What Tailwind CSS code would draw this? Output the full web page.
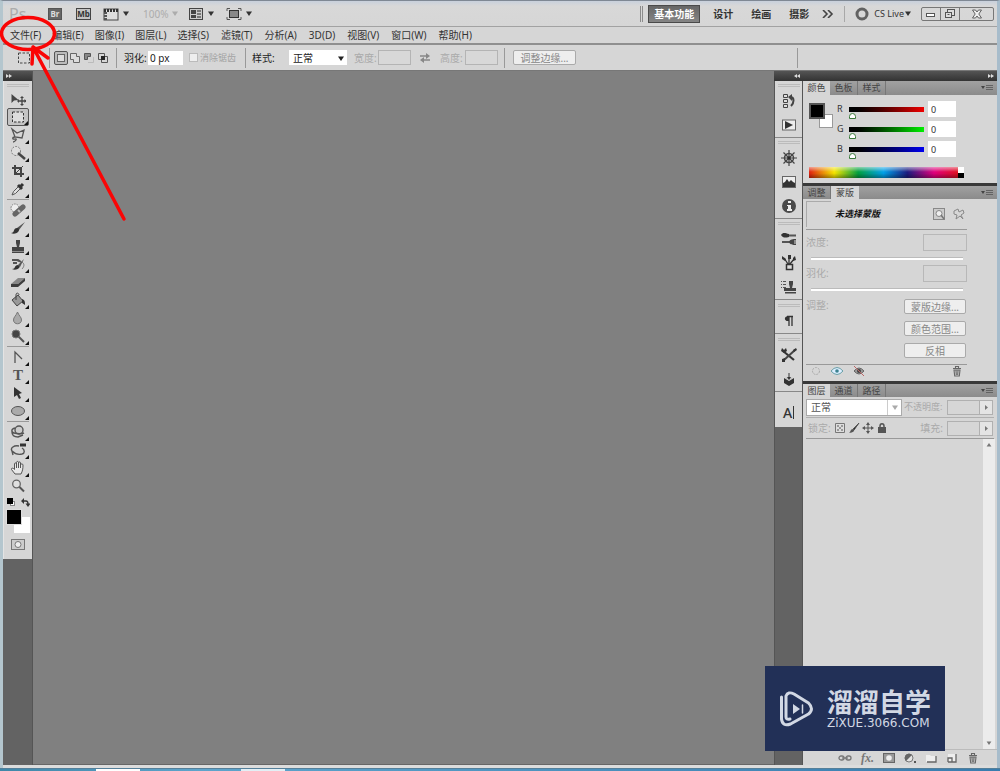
<!DOCTYPE html>
<html lang="zh-CN">
<head>
<meta charset="utf-8">
<title>Ps</title>
<script src="https://cdn.jsdelivr.net/npm/@tailwindcss/browser@4"></script>
</head>
<body class="font-['Noto_Sans','Noto_Sans_CJK_SC',sans-serif] text-[10px] leading-3 text-[#333]">
<svg width="0" height="0" class="absolute" aria-hidden="true">
  <defs>
    <symbol id="down" viewBox="0 0 6 5"><path d="M0 .5h6L3 5z" fill="currentColor"/></symbol>
    <symbol id="tick" viewBox="0 0 4 4"><path d="M4 0v4H0z" fill="#111"/></symbol>
    <symbol id="menu" viewBox="0 0 12 8"><path d="M0 2h4L2 5z" fill="#444"/><path d="M5 1.500h7M5 3.500h7M5 5.500h7" stroke="#555" stroke-width=".8"/></symbol>
    <symbol id="trash" viewBox="0 0 12 12"><path d="M2 3.500h8M4.500 3V1.500h3V3M3 5l.7 6h4.600L9 5zM5 5.500l.3 4.500M7 5.500L6.700 10" fill="none" stroke="#666" stroke-width="1.100"/></symbol>
  </defs>
</svg>
<div class="relative flex h-screen flex-col overflow-hidden bg-[#d6d6d6]">
  <div class="flex min-h-0 flex-1 flex-col border-x-[3px] border-l-[#b4c6ce] border-r-[#a7bccb] border-t border-t-[#7f8894]">
    <header class="flex h-[26px] shrink-0 items-center border-b border-[#a2a2a2] bg-linear-to-b from-[#c8d0dc] via-[#d8d8d8] via-20% to-[#d6d6d6] pl-[6px] pr-[3px]">
      <div class="flex items-center">
        <span class="w-[39px] text-base leading-4 text-[#acacac]">Ps</span>
        <button aria-label="Bridge" class="mr-[14px] h-3 w-[14px] border border-[#555] bg-[#666] text-[8px] leading-[10px] font-bold text-[#ddd]">Br</button>
        <button aria-label="Mini Bridge" class="mr-3 h-3 w-[15px] border border-[#444] bg-[#c4c4c4] text-[8px] leading-[10px] font-bold text-[#333]">Mb</button>
        <button aria-label="查看额外内容" class="mr-[14px] flex items-center gap-1"><svg class="h-[14px] w-4" viewBox="0 0 16 14"><rect x="1" y="2" width="14" height="11" fill="#ddd" stroke="#444"/><path d="M1 3.500h14" stroke="#333" stroke-width="3" stroke-dasharray="2 1"/><path d="M2.500 5v8" stroke="#555" stroke-width="3" stroke-dasharray="2 1"/></svg><svg class="h-[5px] w-[6px]"><use href="#down"/></svg></button>
        <button aria-label="缩放" class="mr-[10px] flex items-center gap-[4px] text-[#acacac]"><span>100%</span><svg class="h-[5px] w-[6px]"><use href="#down"/></svg></button>
        <button aria-label="排列文档" class="mr-3 flex items-center gap-1"><svg class="h-[14px] w-4" viewBox="0 0 16 14"><rect x="1.500" y="1.500" width="13" height="11" fill="#ccc" stroke="#444"/><path d="M3 3h5v4H3zM3 8h5v3H3z" fill="#444"/><path d="M9 3h4v2H9zM9 6h4v2H9zM9 9h4v2H9z" fill="#777"/></svg><svg class="h-[5px] w-[6px]"><use href="#down"/></svg></button>
        <button aria-label="屏幕模式" class="flex items-center gap-1"><svg class="h-[14px] w-4" viewBox="0 0 16 14"><rect x="3.500" y="3.500" width="9" height="7" fill="#888" stroke="#333"/><path d="M1 4V1.500h3M12 1.500h3V4M1 10v2.500h3M12 12.500h3V10" fill="none" stroke="#555"/></svg><svg class="h-[5px] w-[6px]"><use href="#down"/></svg></button>
      </div>
      <div class="ml-auto flex items-center text-[10px] font-bold">
        <span class="mr-[5px] h-4 w-[3px] border-x border-[#8b8b8b]"></span>
        <button class="mr-[13px] h-[18px] w-[52px] border border-[#4a4a4a] bg-linear-to-b from-[#666] to-[#858585] text-white">基本功能</button>
        <button class="mr-[18px]">设计</button>
        <button class="mr-[18px]">绘画</button>
        <button class="mr-[13px]">摄影</button>
        <button aria-label="更多" class="mr-[10px]"><svg class="h-2 w-3" viewBox="0 0 12 8" fill="none" stroke="#444" stroke-width="1.600"><path d="M1 0l4 4-4 4M6 0l4 4-4 4"/></svg></button>
        <span class="mr-[10px] h-4 w-px bg-[#a8a8a8]"></span>
        <button class="mr-[10px] flex items-center text-[9px] font-normal"><svg class="mr-[5px] size-[14px]" viewBox="0 0 14 14"><circle cx="7" cy="7" r="5" fill="none" stroke="#626262" stroke-width="3"/></svg>CS Live<svg class="ml-px h-[5px] w-[6px]"><use href="#down"/></svg></button>
        <div class="flex h-[14px] w-[73px] rounded-xs border border-[#777]">
          <button aria-label="最小化" class="flex w-[19px] items-center justify-center border-r border-[#777]"><svg class="h-2 w-3" viewBox="0 0 12 8"><rect x="1.500" y="3.500" width="8" height="3" fill="#fff" stroke="#555"/></svg></button>
          <button aria-label="还原" class="flex w-[19px] items-center justify-center border-r border-[#777]"><svg class="h-[10px] w-3" viewBox="0 0 12 10" fill="#ddd" stroke="#555"><rect x="3.500" y=".5" width="7" height="6"/><rect x="1.500" y="3.500" width="6" height="5"/><path d="M3.500 5.500h2"/></svg></button>
          <button aria-label="关闭" class="flex flex-1 items-center justify-center"><svg class="h-[10px] w-3" viewBox="0 0 12 10"><path d="M1.500 1h3L6 3l1.500-2h3L7.800 5l2.700 4h-3L6 7 4.500 9h-3l2.700-4z" fill="#eee" stroke="#555" stroke-width=".9"/></svg></button>
        </div>
      </div>
    </header>
    <nav class="flex h-[18px] shrink-0 items-center gap-3 border-b-2 border-[#8f8f8f] pl-[7px]">
      <div class="flex gap-[11px]"><button>文件(F)</button><button>编辑(E)</button><button>图像(I)</button><button>图层(L)</button><button>选择(S)</button></div>
      <button>滤镜(T)</button><button>分析(A)</button><button>3D(D)</button><button>视图(V)</button><button>窗口(W)</button><button>帮助(H)</button>
    </nav>
    <section class="flex h-[26px] shrink-0 items-center border-b border-[#777] text-[#222]">
      <svg class="mr-[18px] ml-[14px] h-3 w-[14px]" viewBox="0 0 14 12"><rect x="1.500" y="1" width="11" height="10" fill="none" stroke="#444" stroke-dasharray="2.500 1.500"/></svg>
      <span class="mr-[4px] h-5 w-px bg-[#999]"></span>
      <button aria-label="新选区" class="mr-px flex h-[14px] w-[14px] items-center justify-center rounded-xs border border-[#555] bg-[#bbb]"><svg class="size-2" viewBox="0 0 8 8"><rect x=".5" y=".5" width="7" height="7" fill="#ddd" stroke="#666"/></svg></button>
      <button aria-label="添加到选区" class="mr-[2px]"><svg class="size-3" viewBox="0 0 12 12"><path d="M1.500 1.500h6v3h3v6h-6v-3h-3z" fill="#ddd" stroke="#666"/></svg></button>
      <button aria-label="从选区减去" class="mr-[2px]"><svg class="size-3" viewBox="0 0 12 12"><path d="M1.500 1.500h6v3h-3v3h-3z" fill="#888" stroke="#555"/><path d="M5 10.500h5.500V5" fill="none" stroke="#bbb"/></svg></button>
      <button aria-label="与选区交叉" class="mr-[7px]"><svg class="size-3" viewBox="0 0 12 12"><path d="M1.500 1.500h6v6h-6zM4.500 4.500h6v6h-6z" fill="none" stroke="#555"/><path d="M4 4h4v4H4z" fill="#222"/></svg></button>
      <span class="mr-[7px] h-5 w-px bg-[#999]"></span>
      <label for="feather" class="w-[24px] whitespace-nowrap">羽化:</label>
      <input id="feather" value="0 px" class="mr-[6px] h-[14px] w-[35px] bg-white pl-[2px]">
      <label class="mr-2 flex w-[48px] items-center gap-[2px] whitespace-nowrap text-[9px] text-[#a3a3a3]"><input type="checkbox" disabled class="size-[9px] shrink-0 appearance-none border border-[#bbb] bg-[#eee]">消除锯齿</label>
      <span class="mr-[6px] h-5 w-px bg-[#999]"></span>
      <label for="style" class="w-[37px]">样式:</label>
      <div class="relative mr-[7px] h-[15px] w-[58px]"><select id="style" class="h-full w-full appearance-none bg-white pl-1"><option>正常</option></select><svg class="pointer-events-none absolute top-[6px] right-[3px] h-[5px] w-[6px]"><use href="#down"/></svg></div>
      <label for="sw" class="w-[24px] text-[#aaa]">宽度:</label>
      <input id="sw" disabled class="mr-[8px] h-[15px] w-[33px] border border-[#b4b4b4] bg-[#d8d8d8]">
      <button aria-label="互换" class="mr-[9px]"><svg class="h-[10px] w-3" viewBox="0 0 12 10"><path d="M1 3h7M4 7h7" stroke="#888" stroke-width="1.500"/><path d="M7 0l4 3-4 3zM5 4L1 7l4 3z" fill="#888"/></svg></button>
      <label for="sh" class="w-[25px] text-[#aaa]">高度:</label>
      <input id="sh" disabled class="mr-[6px] h-[15px] w-[33px] border border-[#b4b4b4] bg-[#d8d8d8]">
      <span class="mr-[8px] h-5 w-px bg-[#999]"></span>
      <button class="h-[15px] w-[63px] rounded-xs border border-[#aaa] bg-[#eee] leading-3 text-[#888]">调整边缘...</button>
      <span class="mr-[199px] ml-auto h-5 w-px bg-[#999]"></span>
    </section>

    <main class="flex min-h-0 flex-1">
      <aside class="w-[30px] shrink-0 border-r border-[#555] bg-[#636363]">
        <div class="flex h-[10px] items-center bg-linear-to-b from-[#555] to-[#333] pl-[3px]"><svg class="h-1 w-[6px]" viewBox="0 0 6 4"><path d="M0 0l3 2-3 2zM3 0l3 2-3 2z" fill="#ddd"/></svg></div>
        <div class="flex h-[478px] flex-col items-center border-l border-[#e4e4e4] bg-[#d6d6d6]">
          <div class="mt-[3px] mb-[3px] h-[3px] w-[22px] shrink-0 border-y border-[#bbb]"></div>
          <div class="flex flex-col border-b border-[#999] pb-px mb-px">
            <button aria-label="移动" class="flex h-[18px] w-[22px] items-center justify-center"><svg class="size-4" viewBox="0 0 16 16"><path d="M1.500 3v9L4 9.500 8.500 9z" fill="#444"/><path d="M12 6v8M8 10h8" stroke="#444" stroke-width="1.300"/><path d="M12 5l-2 2h4zM12 15l-2-2h4zM7 10l2-2v4zM16.500 10l-2-2v4z" fill="#444"/></svg></button>
            <button aria-label="矩形选框" class="relative flex h-[18px] w-[22px] items-center justify-center rounded-xs border border-[#555] bg-[#c4c4c4]"><svg class="size-4" viewBox="0 0 16 16"><rect x="2.500" y="3" width="11" height="10" fill="#ddd" stroke="#333" stroke-dasharray="2.500 1.500"/></svg><svg class="absolute right-0 bottom-0 size-1"><use href="#tick"/></svg></button>
            <button aria-label="多边形套索" class="relative flex h-[18px] w-[22px] items-center justify-center"><svg class="size-4" viewBox="0 0 16 16" fill="none" stroke="#555" stroke-width="1.300"><path d="M2 2l5 4 7-3-2 8-7-1zM5 10c-3 0-3 3 0 2s0 3-2 3"/></svg><svg class="absolute right-0 bottom-0 size-1"><use href="#tick"/></svg></button>
            <button aria-label="快速选择" class="relative flex h-[18px] w-[22px] items-center justify-center"><svg class="size-4" viewBox="0 0 16 16"><circle cx="6" cy="6" r="4.500" fill="#ddd" stroke="#777" stroke-dasharray="2 1.300"/><path d="M8 8l7 6" stroke="#444" stroke-width="2.500"/></svg><svg class="absolute right-0 bottom-0 size-1"><use href="#tick"/></svg></button>
            <button aria-label="裁剪" class="relative flex h-[18px] w-[22px] items-center justify-center"><svg class="size-4" viewBox="0 0 16 16" fill="none" stroke="#444" stroke-width="2"><path d="M5 2v9h9M2 5h9v9"/><path d="M5 11l8-8" stroke-width="1"/></svg><svg class="absolute right-0 bottom-0 size-1"><use href="#tick"/></svg></button>
            <button aria-label="吸管" class="relative flex h-[18px] w-[22px] items-center justify-center"><svg class="size-4" viewBox="0 0 16 16"><path d="M2 14l1.500-3.500L9 5l2 2-5.500 5.500z" fill="#ddd" stroke="#555"/><path d="M8 4l4 4M10 6l3-3" stroke="#333" stroke-width="3"/></svg><svg class="absolute right-0 bottom-0 size-1"><use href="#tick"/></svg></button>
          </div>
          <div class="mb-px flex flex-col border-b border-[#999] pb-px">
            <button aria-label="修复画笔" class="relative flex h-[18px] w-[22px] items-center justify-center"><svg class="size-4" viewBox="0 0 16 16"><circle cx="5" cy="6" r="4" fill="#eee" stroke="#777" stroke-dasharray="1.500 1"/><path d="M5 12l8-7" stroke="#666" stroke-width="5" stroke-linecap="round"/><path d="M8 8l2 2" stroke="#bbb" stroke-width="2"/></svg><svg class="absolute right-0 bottom-0 size-1"><use href="#tick"/></svg></button>
            <button aria-label="画笔" class="relative flex h-[18px] w-[22px] items-center justify-center"><svg class="size-4" viewBox="0 0 16 16"><path d="M15 2L7 8l2 2z" fill="#555"/><path d="M1 13c4 0 2-5 6-5 2 0 3 2 1 4-2 2-5 2-7 1z" fill="#333"/></svg><svg class="absolute right-0 bottom-0 size-1"><use href="#tick"/></svg></button>
            <button aria-label="仿制图章" class="relative flex h-[18px] w-[22px] items-center justify-center"><svg class="size-4" viewBox="0 0 16 16" fill="#444"><path d="M6 2h4v3L9 9h5v4H2V9h5L6 5zM2 13.500h12V15H2z"/></svg><svg class="absolute right-0 bottom-0 size-1"><use href="#tick"/></svg></button>
            <button aria-label="历史记录画笔" class="relative flex h-[18px] w-[22px] items-center justify-center"><svg class="size-4" viewBox="0 0 16 16"><path d="M2 4h6l3 2M3 7h4" stroke="#555" stroke-width="2"/><path d="M14 3L8 9l2 2z" fill="#555"/><path d="M2 13c4 0 2-4 6-4 2 1 2 2 1 3-2 2-5 2-7 1z" fill="#333"/><path d="M12 6c3 2 2 5 0 7" fill="none" stroke="#777"/></svg><svg class="absolute right-0 bottom-0 size-1"><use href="#tick"/></svg></button>
            <button aria-label="橡皮擦" class="relative flex h-[18px] w-[22px] items-center justify-center"><svg class="size-4" viewBox="0 0 16 16"><path d="M1 10l7-6h7l-7 6z" fill="#888"/><path d="M1 10h7l7-6v3l-7 6H1z" fill="#3d3d3d"/></svg><svg class="absolute right-0 bottom-0 size-1"><use href="#tick"/></svg></button>
            <button aria-label="油漆桶" class="relative flex h-[18px] w-[22px] items-center justify-center"><svg class="size-4" viewBox="0 0 16 16"><path d="M2 8l6-5 5 6-6 5z" fill="#999" stroke="#444"/><path d="M6 8V3c0-3 3-2 3 0" fill="none" stroke="#444"/><path d="M12 7c3 1 3 3 3 6l-3-2z" fill="#333"/></svg><svg class="absolute right-0 bottom-0 size-1"><use href="#tick"/></svg></button>
            <button aria-label="模糊" class="relative flex h-[18px] w-[22px] items-center justify-center"><svg class="size-4" viewBox="0 0 16 16"><path d="M7.500 2C6 6 3.500 7 3.500 10c0 5 8 5 8 0 0-3-2.500-4-4-8z" fill="#aaa" stroke="#777"/></svg><svg class="absolute right-0 bottom-0 size-1"><use href="#tick"/></svg></button>
            <button aria-label="减淡" class="relative flex h-[18px] w-[22px] items-center justify-center"><svg class="size-4" viewBox="0 0 16 16"><path d="M8 8l6 6" stroke="#555" stroke-width="2"/><circle cx="6" cy="6" r="4" fill="#444" stroke="#777"/></svg><svg class="absolute right-0 bottom-0 size-1"><use href="#tick"/></svg></button>
          </div>
          <div class="mb-px flex flex-col border-b border-[#999] pb-px">
            <button aria-label="钢笔" class="relative flex h-[18px] w-[22px] items-center justify-center"><svg class="size-4" viewBox="0 0 16 16"><path d="M5 14V3l7 7" fill="none" stroke="#555" stroke-width="1.300"/></svg><svg class="absolute right-0 bottom-0 size-1"><use href="#tick"/></svg></button>
            <button aria-label="文字" class="relative flex h-[18px] w-[22px] items-center justify-center font-['Liberation_Serif',serif] text-[15px] font-bold text-[#555]">T<svg class="absolute right-0 bottom-0 size-1"><use href="#tick"/></svg></button>
            <button aria-label="路径选择" class="relative flex h-[18px] w-[22px] items-center justify-center"><svg class="size-4" viewBox="0 0 16 16"><path d="M4 2v10l3-2 2 4 2-1-2-4 3-1z" fill="#333"/></svg><svg class="absolute right-0 bottom-0 size-1"><use href="#tick"/></svg></button>
            <button aria-label="椭圆" class="relative flex h-[18px] w-[22px] items-center justify-center"><svg class="size-4" viewBox="0 0 16 16"><ellipse cx="8" cy="8" rx="6.500" ry="4.500" fill="#aaa" stroke="#555"/></svg><svg class="absolute right-0 bottom-0 size-1"><use href="#tick"/></svg></button>
          </div>
          <div class="flex flex-col">
            <button aria-label="3D 旋转" class="relative flex h-[18px] w-[22px] items-center justify-center"><svg class="size-4" viewBox="0 0 16 16" fill="none" stroke="#555" stroke-width="1.400"><circle cx="9" cy="6" r="4" fill="#ccc"/><path d="M5 4c-4 1-4 4-1 5s8 1 10 0M2 8c0 3 2 5 6 5l5-2"/></svg><svg class="absolute right-0 bottom-0 size-1"><use href="#tick"/></svg></button>
            <button aria-label="3D 相机" class="relative flex h-[18px] w-[22px] items-center justify-center"><svg class="size-4" viewBox="0 0 16 16" fill="none" stroke="#555" stroke-width="1.400"><path d="M9 4C4 3 0 6 2 9c2 2 6 4 10 3M12 6c3 2 3 5 0 6M2 9l1 4"/><path d="M10 3h6" stroke="#333" stroke-width="3"/></svg><svg class="absolute right-0 bottom-0 size-1"><use href="#tick"/></svg></button>
            <button aria-label="抓手" class="relative flex h-[18px] w-[22px] items-center justify-center"><svg class="size-4" viewBox="0 0 16 16"><path d="M5 14L1.500 9.500C1 8 3 7.500 4.500 9.500V4c0-1.500 2-1.500 2 0V2.500c0-1.500 2-1.500 2 0V3c0-1.500 2-1.500 2 0v2c0-1.500 2.500-1.500 2.500 0 0 4-.5 6-2 9zM6.500 4v4M8.500 3v5M10.500 4v4" fill="#e8e8e8" stroke="#555"/></svg><svg class="absolute right-0 bottom-0 size-1"><use href="#tick"/></svg></button>
            <button aria-label="缩放工具" class="flex h-[18px] w-[22px] items-center justify-center"><svg class="size-4" viewBox="0 0 16 16"><circle cx="6.500" cy="6" r="3.800" fill="#e0e0e0" stroke="#666" stroke-width="1.300"/><path d="M9.500 9l4.500 4.500" stroke="#555" stroke-width="2"/></svg></button>
          </div>
          <div class="flex h-[14px] w-[23px] items-center justify-between">
            <button aria-label="默认颜色"><svg class="size-[9px]" viewBox="0 0 9 9"><rect x="3.500" y="3.500" width="4" height="4" fill="#fff" stroke="#888"/><path d="M0 0h6v6H0z" fill="#000"/></svg></button>
            <button aria-label="切换颜色"><svg class="size-[9px]" viewBox="0 0 9 9"><path d="M2 3h3q2 0 2 3" fill="none" stroke="#333" stroke-width="1.300"/><path d="M3 0v6L0 3zM4.500 5.500h5L7 9z" fill="#333"/></svg></button>
          </div>
          <div class="grid h-6 w-[24px] grid-cols-1">
            <button aria-label="背景色" class="col-start-1 row-start-1 size-4 self-end justify-self-end bg-white"></button>
            <button aria-label="前景色" class="col-start-1 row-start-1 size-4 border border-[#ddd] bg-black"></button>
          </div>
          <button aria-label="快速蒙版" class="mt-[6px]"><svg class="h-[11px] w-[14px]" viewBox="0 0 14 11"><rect x=".5" y=".5" width="13" height="10" fill="#ccc" stroke="#777"/><circle cx="7" cy="5.500" r="3" fill="#eee" stroke="#777"/></svg></button>
        </div>
      </aside>

      <div class="min-w-0 flex-1 border-b border-[#666] bg-[#808080]"></div>

      <div class="flex w-[223px] shrink-0 flex-col">
        <div class="flex h-[10px] shrink-0 items-center justify-between bg-linear-to-b from-[#555] to-[#333] pr-[3px] pl-5"><svg class="h-1 w-[6px]" viewBox="0 0 6 4"><path d="M3 0L0 2l3 2zM6 0L3 2l3 2z" fill="#ddd"/></svg><svg class="h-1 w-[6px]" viewBox="0 0 6 4"><path d="M0 0l3 2-3 2zM3 0l3 2-3 2z" fill="#ddd"/></svg></div>
        <div class="flex min-h-0 flex-1">
          <aside class="w-[29px] shrink-0 border-x border-[#555] bg-[#636363]">
            <div class="flex flex-col items-center border-b border-[#888] bg-[#d6d6d6] pt-[3px]">
              <span class="mb-[2px] h-[3px] w-[22px] border-y border-[#bbb]"></span>
              <button aria-label="历史记录" class="flex h-6 items-center"><svg class="size-4" viewBox="0 0 16 16"><path d="M2.500 1.500h4v3h-4zM2.500 6.500h4v3h-4zM2.500 11.500h4v3h-4z" fill="#ddd" stroke="#444"/><path d="M9 4c5 0 4 6 1 9" fill="none" stroke="#444" stroke-width="2"/><path d="M11 1v7L7 4z" fill="#444"/></svg></button>
              <button aria-label="动作" class="flex h-6 items-center"><svg class="size-4" viewBox="0 0 16 16"><rect x="1.500" y="3" width="13" height="10" fill="#eee" stroke="#666"/><path d="M4 4v8l8-4z" fill="#333"/></svg></button>
            </div>
            <div class="flex flex-col items-center border-b border-[#888] bg-[#d6d6d6] pt-[3px]">
              <span class="mb-[2px] h-[3px] w-[22px] border-y border-[#bbb]"></span>
              <button aria-label="导航器" class="flex h-6 items-center"><svg class="size-4" viewBox="0 0 16 16" fill="none" stroke="#444"><circle cx="8" cy="8" r="4.500" stroke-width="1.500"/><path d="M8 0v16M0 8h16M2.500 2.500l11 11M13.500 2.500l-11 11" stroke-width="1.200"/><circle cx="8" cy="8" r="1.500" fill="#222"/></svg></button>
              <button aria-label="直方图" class="flex h-6 items-center"><svg class="size-4" viewBox="0 0 16 16"><rect x="1.500" y="2.500" width="13" height="11" fill="#eee" stroke="#666"/><path d="M2 13V9l2-1 2-3 2 3 2-2 2 2 2 1v4z" fill="#333"/></svg></button>
              <button aria-label="信息" class="flex h-6 items-center"><svg class="size-4" viewBox="0 0 16 16"><circle cx="8" cy="8" r="7" fill="#4a4a4a"/><path d="M7 3h3v2H7zM6 7h4v4h1v2H6v-2h1V8H6z" fill="#eee"/></svg></button>
            </div>
            <div class="flex flex-col items-center border-b border-[#888] bg-[#d6d6d6] pt-[3px]">
              <span class="mb-[2px] h-[3px] w-[22px] border-y border-[#bbb]"></span>
              <button aria-label="画笔预设" class="flex h-6 items-center"><svg class="size-4" viewBox="0 0 16 16"><path d="M7 4.500h8M1 11h9" stroke="#555" stroke-width="2"/><path d="M0 4c2-3 4-2 8-1v3C4 7 2 7 0 4z" fill="#333"/><path d="M8 11c1-3 4-3 7-3v1.500h-2v1h2v1h-2v1h2V14c-3 0-6 0-7-3z" fill="#444"/></svg></button>
              <button aria-label="画笔面板" class="flex h-6 items-center"><svg class="size-4" viewBox="0 0 16 16"><path d="M7 9L3 3M8 9V3M9 9l4-5" stroke="#333" stroke-width="1.300"/><path d="M1 1l4 3-1 2-3-2zM7 0h3v4H7zM12 3l2-2 1 4-3 1z" fill="#333"/><path d="M5.500 9.500h6v5h-6z" fill="#ddd" stroke="#333" stroke-width="1.500"/></svg></button>
              <button aria-label="仿制源" class="flex h-6 items-center"><svg class="size-4" viewBox="0 0 16 16"><path d="M0 2.500h5M0 5.500h5M0 8.500h5" stroke="#555" stroke-dasharray="1 1 4"/><path d="M8 2h4v3l-1 4h4v3H3V9h6L8 5zM4 13h11v1.500H4z" fill="#444"/></svg></button>
            </div>
            <div class="flex flex-col items-center border-b border-[#888] bg-[#d6d6d6] pt-1">
              <span class="mb-[2px] h-[3px] w-[22px] border-y border-[#bbb]"></span>
              <button aria-label="段落" class="flex h-6 items-center"><svg class="size-4" viewBox="0 0 16 16"><path d="M8 3v10M11 3v10M6 3.500h6" stroke="#333" stroke-width="1.300"/><path d="M8 3C2 3 3 9 8 8z" fill="#333"/></svg></button>
            </div>
            <div class="flex flex-col items-center border-b border-[#888] bg-[#d6d6d6] pt-1">
              <span class="mb-[2px] h-[3px] w-[22px] border-y border-[#bbb]"></span>
              <button aria-label="工具预设" class="flex h-6 items-center"><svg class="size-4" viewBox="0 0 16 16"><path d="M2 4l11 9" stroke="#333" stroke-width="2.200"/><path d="M14 3L3 13" stroke="#444" stroke-width="2"/><path d="M1 1l2 2 2-2 1 3-3 2-3-2zM12 3l3-2 1 2-3 2zM1 12l3-1v4H1z" fill="#333"/></svg></button>
              <button aria-label="3D" class="flex h-6 items-center"><svg class="size-4" viewBox="0 0 16 16"><path d="M8 2v6" stroke="#333"/><path d="M3 7l5 3 5-3v5l-5 3-5-3z" fill="#333"/><path d="M4 7l4-1 4 1-4 2z" fill="#bbb"/><path d="M6 6h4L8 9z" fill="#333"/></svg></button>
            </div>
            <div class="flex h-[35px] items-center justify-center bg-[#d6d6d6] pt-[6px]">
              <button aria-label="字符" class="flex items-center gap-px font-['Noto_Sans',sans-serif] text-sm leading-4 font-medium text-[#333]">A<span class="h-[13px] w-px bg-[#333]"></span></button>
            </div>
          </aside>

          <div class="flex min-w-0 flex-1 flex-col">
            <section class="border-b-[3px] border-[#393939]">
              <div class="flex h-[14px] items-center bg-linear-to-b from-[#a1a1a1] to-[#8b8b8b] text-[9px] leading-[14px] text-[#444]">
                <button class="h-full w-[27px] bg-[#d6d6d6]">颜色</button><button class="h-full w-7 border-r border-[#777]">色板</button><button class="h-full w-7 border-r border-[#777]">样式</button>
                <button aria-label="颜色菜单" class="mr-1 ml-auto"><svg class="h-2 w-3"><use href="#menu"/></svg></button>
              </div>
              <div class="flex h-[70px] pt-[6px] pl-[6px]">
                <div class="mt-[2px] mr-1 grid h-[25px] w-6 grid-cols-1"><button aria-label="背景" class="col-start-1 row-start-1 size-[14px] self-end justify-self-end border border-[#999] bg-white"></button><button aria-label="前景" class="col-start-1 row-start-1 size-4 border-2 border-[#555] bg-black"></button></div>
                <div class="flex flex-col gap-1 text-[9px]">
                  <div class="flex h-4 items-center"><label for="r" class="w-3">R</label><input type="range" aria-label="R" value="0" class="mr-[4px] h-[5px] w-[75px] appearance-none bg-linear-to-r from-black to-[#f00000] [&::-webkit-slider-thumb]:mt-[13px] [&::-webkit-slider-thumb]:h-[6px] [&::-webkit-slider-thumb]:w-[7px] [&::-webkit-slider-thumb]:appearance-none [&::-webkit-slider-thumb]:rounded-t-full [&::-webkit-slider-thumb]:border [&::-webkit-slider-thumb]:border-[#3a7a3a] [&::-webkit-slider-thumb]:bg-white"><input id="r" value="0" class="h-4 w-7 bg-white pl-[3px]"></div>
                  <div class="flex h-4 items-center"><label for="g" class="w-3">G</label><input type="range" aria-label="G" value="0" class="mr-[4px] h-[5px] w-[75px] appearance-none bg-linear-to-r from-black to-[#00f000] [&::-webkit-slider-thumb]:mt-[13px] [&::-webkit-slider-thumb]:h-[6px] [&::-webkit-slider-thumb]:w-[7px] [&::-webkit-slider-thumb]:appearance-none [&::-webkit-slider-thumb]:rounded-t-full [&::-webkit-slider-thumb]:border [&::-webkit-slider-thumb]:border-[#3a7a3a] [&::-webkit-slider-thumb]:bg-white"><input id="g" value="0" class="h-4 w-7 bg-white pl-[3px]"></div>
                  <div class="flex h-4 items-center"><label for="b" class="w-3">B</label><input type="range" aria-label="B" value="0" class="mr-[4px] h-[5px] w-[75px] appearance-none bg-linear-to-r from-black to-[#0000f0] [&::-webkit-slider-thumb]:mt-[13px] [&::-webkit-slider-thumb]:h-[6px] [&::-webkit-slider-thumb]:w-[7px] [&::-webkit-slider-thumb]:appearance-none [&::-webkit-slider-thumb]:rounded-t-full [&::-webkit-slider-thumb]:border [&::-webkit-slider-thumb]:border-[#3a7a3a] [&::-webkit-slider-thumb]:bg-white"><input id="b" value="0" class="h-4 w-7 bg-white pl-[3px]"></div>
                </div>
              </div>
              <div class="mt-[2px] mr-[33px] mb-[5px] ml-[6px] flex h-[11px]">
                <div class="flex-1 bg-[linear-gradient(to_bottom,rgba(255,255,255,.55),transparent_45%,transparent_55%,rgba(0,0,0,.35)),linear-gradient(to_right,#e02010,#f5e500_17%,#00a040_33%,#00a0e8_50%,#1b1c80_66%,#e0007c_84%,#e01020)]"></div>
                <div class="flex w-[6px] flex-col"><span class="flex-1 bg-white"></span><span class="flex-1 bg-black"></span></div>
              </div>
            </section>

            <section class="border-b-[3px] border-[#393939]">
              <div class="flex h-[13px] items-center bg-linear-to-b from-[#a1a1a1] to-[#8b8b8b] text-[9px] leading-[13px] text-[#444]">
                <button class="h-full w-7 border-r border-[#777]">调整</button><button class="h-full w-7 bg-[#d6d6d6]">蒙版</button>
                <button aria-label="蒙版菜单" class="mr-1 ml-auto"><svg class="h-2 w-3"><use href="#menu"/></svg></button>
              </div>
              <div class="mr-[30px] ml-[3px] h-[182px]">
                <div class="flex h-[31px] items-center border-b border-[#999]">
                  <span class="mr-1 h-[26px] w-[25px] border-t border-l border-[#aaa]"></span>
                  <span class="text-[9px] font-bold text-[#111] italic">未选择蒙版</span>
                  <button aria-label="像素蒙版" class="mr-[8px] ml-auto"><svg class="size-3" viewBox="0 0 12 12"><rect x=".5" y=".5" width="11" height="11" fill="#ccc" stroke="#888"/><circle cx="6" cy="5.500" r="3" fill="#eee" stroke="#888"/><path d="M8 7l3 4" stroke="#777" stroke-width="1.500"/></svg></button>
                  <button aria-label="矢量蒙版" class="mr-[2px]"><svg class="size-3" viewBox="0 0 12 12" fill="none" stroke="#888"><path d="M1 3l4-2 1 3 4-2 1 3-3 2 2 4-3-3-4 3 1-4-3-1z"/></svg></button>
                </div>
                <div class="mt-[3px] flex h-[18px] items-center justify-between text-[#aaa]"><label for="density">浓度:</label><input id="density" disabled class="h-[17px] w-[44px] border border-[#b8b8b8]"></div>
                <input type="range" aria-label="浓度" disabled class="mx-[5px] mt-[6px] block h-[3px] w-[152px] appearance-none border-t border-[#bbb] bg-white [&::-webkit-slider-thumb]:size-0 [&::-webkit-slider-thumb]:appearance-none">
                <div class="mt-[4px] flex h-[18px] items-center justify-between text-[#aaa]"><label for="mf">羽化:</label><input id="mf" disabled class="h-[17px] w-[44px] border border-[#b8b8b8]"></div>
                <input type="range" aria-label="羽化" disabled class="mx-[5px] mt-[6px] block h-[3px] w-[152px] appearance-none border-t border-[#bbb] bg-white [&::-webkit-slider-thumb]:size-0 [&::-webkit-slider-thumb]:appearance-none">
                <div class="mt-[8px] flex items-start justify-between text-[#aaa]"><span>调整:</span>
                  <div class="flex flex-col gap-[7px] pr-px text-[#888]"><button class="h-[15px] w-[62px] rounded-xs border border-[#aaa] bg-[#eee]">蒙版边缘...</button><button class="h-[15px] w-[62px] rounded-xs border border-[#aaa] bg-[#eee]">颜色范围...</button><button class="h-[15px] w-[62px] rounded-xs border border-[#aaa] bg-[#eee]">反相</button></div>
                </div>
                <div class="mt-[6px] flex items-center border-t border-[#999] pr-1 pl-[4px]">
                  <button aria-label="载入选区" class="mr-[8px]"><svg class="size-3" viewBox="0 0 12 12"><circle cx="6" cy="6" r="3.500" fill="none" stroke="#aaa" stroke-dasharray="2 1"/></svg></button>
                  <button aria-label="应用蒙版" class="mr-[8px]"><svg class="h-3 w-[14px]" viewBox="0 0 14 12"><path d="M1 6q6-7 12 0-6 7-12 0z" fill="#def" stroke="#6aa0a8"/><circle cx="7" cy="6" r="1.800" fill="#3c8290"/></svg></button>
                  <button aria-label="停用蒙版"><svg class="h-3 w-[14px]" viewBox="0 0 14 12"><path d="M2 6q5-6 10 0-5 6-10 0z" fill="#999" stroke="#666"/><circle cx="7" cy="6" r="2" fill="#444"/><path d="M2 1l10 10" stroke="#b66"/></svg></button>
                  <button aria-label="删除蒙版" class="ml-auto"><svg class="size-3"><use href="#trash"/></svg></button>
                </div>
              </div>
            </section>

            <section class="flex min-h-0 flex-1 flex-col">
              <div class="flex h-[13px] shrink-0 items-center bg-linear-to-b from-[#a1a1a1] to-[#8b8b8b] text-[9px] leading-[13px] text-[#444]">
                <button class="h-full w-[27px] bg-[#d6d6d6]">图层</button><button class="h-full w-7 border-r border-[#777]">通道</button><button class="h-full w-7 border-r border-[#777]">路径</button>
                <button aria-label="图层菜单" class="mr-1 ml-auto"><svg class="h-2 w-3"><use href="#menu"/></svg></button>
              </div>
              <div class="mx-[3px] flex h-[21px] shrink-0 items-center border-b border-[#b0b0b0] text-[#aaa]">
                <div class="relative mr-[2px] h-[17px] w-[96px]"><select aria-label="混合模式" class="h-full w-full appearance-none border border-[#aaa] bg-white pl-1 text-[#555]"><option>正常</option></select><span class="pointer-events-none absolute top-px right-px flex h-[15px] w-[14px] items-center justify-center border-l border-[#ccc]"><svg class="h-[5px] w-[6px]"><use href="#down"/></svg></span></div>
                <label for="op" class="whitespace-nowrap text-[9px]">不透明度:</label>
                <input id="op" disabled class="ml-auto h-[15px] w-[33px] border border-[#b0b0b0]"><button aria-label="不透明度滑块" class="mr-px flex h-[15px] w-[13px] items-center justify-center border border-l-0 border-[#b0b0b0] bg-[#e4e4e4]"><svg class="h-[5px] w-[3px]" viewBox="0 0 3 5"><path d="M0 0l3 2.500L0 5z" fill="#777"/></svg></button>
              </div>
              <div class="mx-[3px] flex h-[21px] shrink-0 items-center border-b border-[#999] pl-[2px] text-[#aaa]">
                <span class="mr-[3px]">锁定:</span>
                <div class="flex gap-[2px]">
                <button aria-label="锁定透明像素"><svg class="size-3" viewBox="0 0 12 12"><path d="M1.500 1.500h9v9h-9z" fill="#ddd" stroke="#777"/><path d="M3 3h2v2H3zM7 3h2v2H7zM5 5h2v2H5zM3 7h2v2H3zM7 7h2v2H7z" fill="#999"/></svg></button>
                <button aria-label="锁定图像像素"><svg class="size-3" viewBox="0 0 12 12"><path d="M11 1L5 7l1 1z" stroke="#555"/><path d="M1 11c2-1 1-4 4-4 3 1 0 4-4 4z" fill="#555"/></svg></button>
                <button aria-label="锁定位置"><svg class="size-3" viewBox="0 0 12 12"><path d="M6 2v8M2 6h8" stroke="#555"/><path d="M6 0L4 3h4zM6 12L4 9h4zM0 6l3-2v4zM12 6L9 4v4z" fill="#555"/></svg></button>
                <button aria-label="锁定全部"><svg class="size-3" viewBox="0 0 12 12"><path d="M4 6V4c0-3 4-3 4 0v2" fill="none" stroke="#555" stroke-width="1.500"/><path d="M2 5h8v6H2z" fill="#555"/></svg></button>
                </div>
                <label for="fill" class="mr-1 ml-auto">填充:</label><input id="fill" disabled class="h-[15px] w-[33px] border border-[#b0b0b0]"><button aria-label="填充滑块" class="mr-px flex h-[15px] w-[13px] items-center justify-center border border-l-0 border-[#b0b0b0] bg-[#e4e4e4]"><svg class="h-[5px] w-[3px]" viewBox="0 0 3 5"><path d="M0 0l3 2.500L0 5z" fill="#777"/></svg></button>
              </div>
              <div class="flex min-h-0 flex-1 justify-end border-b border-[#bbb] pr-[2px]"><div class="flex w-3 flex-col items-center justify-between bg-[#ececec] py-1 text-[#777]"><svg class="h-1 w-[6px] rotate-180"><use href="#down"/></svg><svg class="h-1 w-[6px]"><use href="#down"/></svg></div></div>
              <div class="flex h-[15px] shrink-0 items-center justify-end gap-[9px] pr-[18px]">
                <button aria-label="链接图层"><svg class="h-2 w-[14px]" viewBox="0 0 14 8" fill="none" stroke="#777" stroke-width="1.300"><rect x="1" y="2" width="5" height="4" rx="2"/><rect x="8" y="2" width="5" height="4" rx="2"/><path d="M4 4h6"/></svg></button>
                <button aria-label="图层样式" class="font-['Liberation_Serif',serif] text-[12px] leading-3 font-bold text-[#777] italic">fx.</button>
                <button aria-label="添加蒙版"><svg class="size-3" viewBox="0 0 12 12"><rect x=".5" y="1.500" width="11" height="9" fill="#999" stroke="#666"/><circle cx="6" cy="6" r="2.800" fill="#eee"/></svg></button>
                <button aria-label="调整图层"><svg class="size-3" viewBox="0 0 12 12"><circle cx="5" cy="6" r="4" fill="#e4e4e4" stroke="#777"/><path d="M2 9A4 4 0 0 1 8 3z" fill="#666"/><path d="M10 9h2v2h-2z" fill="#555"/></svg></button>
                <button aria-label="新建组"><svg class="size-3" viewBox="0 0 12 12"><path d="M1 3h4l1 1h5v6H1z" fill="#eee"/><path d="M2 10h9V4" fill="none" stroke="#666" stroke-width="1.300"/></svg></button>
                <button aria-label="新建图层"><svg class="size-3" viewBox="0 0 12 12"><path d="M2 2h8v8H2z" fill="#eee"/><path d="M2 10h8V2M2 10V6h4v4" fill="none" stroke="#666" stroke-width="1.300"/></svg></button>
                <button aria-label="删除图层"><svg class="size-3"><use href="#trash"/></svg></button>
              </div>
            </section>
          </div>
        </div>
      </div>
    </main>
    <div class="h-[3px] shrink-0 bg-[#dcdcdc]"></div>
  </div>
  <footer class="flex h-[3px] shrink-0 border-t border-[#557f99] bg-linear-to-r from-[#3f87a8] via-[#5da4cb] via-20% to-[#397cae] pl-24"><span class="mr-[101px] w-11 bg-white"></span><span class="w-11 bg-[#e2eff5]"></span></footer>

  <!-- red callout around the File menu -->
  <svg class="pointer-events-none absolute top-0 left-0 h-[230px] w-[140px]" viewBox="0 0 140 230" fill="none" stroke="#fa0505" stroke-width="3.500" stroke-linecap="round" stroke-linejoin="round"><ellipse cx="28" cy="33.500" rx="26.500" ry="16"/><path d="M33 47l91 172M32 64l1-17 15 11"/></svg>

  <div class="absolute right-[55px] bottom-5 flex h-[85px] w-[180px] items-center gap-[12px] bg-[#223057] pl-[14px] text-[#d2d8e4]">
    <svg class="h-9 w-[36px] shrink-0" viewBox="0 0 36 36" fill="none" stroke="currentColor" stroke-linecap="round" stroke-linejoin="round"><path d="M2.500 6v22q1 8 9 5l18-10q6-5 0-11L15 3q-6-3-8 2v21q0 3 4 2" stroke-width="3"/><path d="M14 13v10l7-5z" fill="currentColor" stroke="none"/><path d="M23.500 14v8" stroke-width="1.500"/></svg>
    <div class="flex flex-col gap-[2px] pb-[2px]">
      <span class="font-['Noto_Sans_CJK_SC',sans-serif] text-[26px] leading-7 font-bold whitespace-nowrap">溜溜自学</span>
      <span class="font-['DejaVu_Sans',sans-serif] text-[12px] leading-3 whitespace-nowrap">ZiXUE.3066.COM</span>
    </div>
  </div>
</div>
</body>
</html>
